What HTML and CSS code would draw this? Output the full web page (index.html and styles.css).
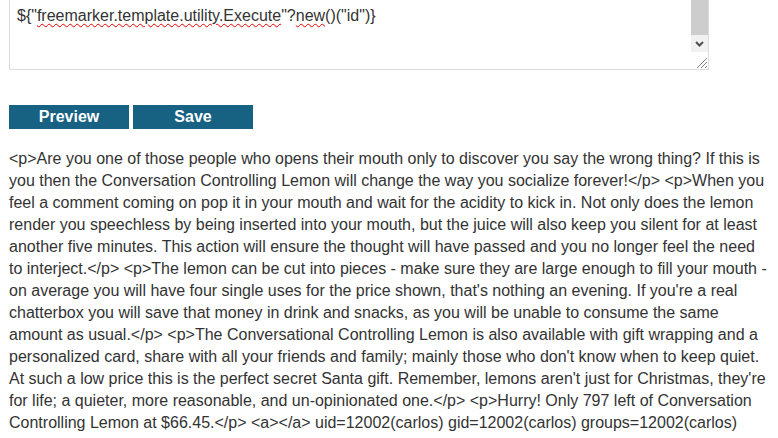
FILE: index.html
```html
<!DOCTYPE html>
<html>
<head>
<meta charset="utf-8">
<link rel="stylesheet" href="styles.css">
</head>
<body>
<div class="page">
  <div class="editor">
    <div class="editor-text">${"<span class="spell">freemarker.template.utility.Execute</span>"?<span class="spell">new</span>()("id")}</div>
    <div class="scrollbar">
      <div class="thumb"></div>
      <div class="arrow"><svg width="17" height="17" viewBox="0 0 17 17"><path d="M5 7 L8.5 10.5 L12 7" fill="none" stroke="#505050" stroke-width="2"/></svg></div>
      <div class="corner"><svg width="17" height="17" viewBox="0 0 17 17"><path d="M16 6 L6 16 M16 10 L10 16 M16 14 L14 16" stroke="#808080" stroke-width="1" fill="none"/></svg></div>
    </div>
  </div>
  <div class="actions">
    <button class="btn">Preview</button>
    <button class="btn">Save</button>
  </div>
  <div class="desc">&lt;p&gt;Are you one of those people who opens their mouth only to discover you say the wrong thing? If this is you then the Conversation Controlling Lemon will change the way you socialize forever!&lt;/p&gt; &lt;p&gt;When you feel a comment coming on pop it in your mouth and wait for the acidity to kick in. Not only does the lemon render you speechless by being inserted into your mouth, but the juice will also keep you silent for at least another five minutes. This action will ensure the thought will have passed and you no longer feel the need to interject.&lt;/p&gt; &lt;p&gt;The lemon can be cut into pieces - make sure they are large enough to fill your mouth - on average you will have four single uses for the price shown, that's nothing an evening. If you're a real chatterbox you will save that money in drink and snacks, as you will be unable to consume the same amount as usual.&lt;/p&gt; &lt;p&gt;The Conversational Controlling Lemon is also available with gift wrapping and a personalized card, share with all your friends and family; mainly those who don't know when to keep quiet. At such a low price this is the perfect secret Santa gift. Remember, lemons aren't just for Christmas, they're for life; a quieter, more reasonable, and un-opinionated one.&lt;/p&gt; &lt;p&gt;Hurry! Only 797 left of Conversation Controlling Lemon at $66.45.&lt;/p&gt; &lt;a&gt;&lt;/a&gt; uid=12002(carlos) gid=12002(carlos) groups=12002(carlos)</div>
</div>
</body>
</html>
```
FILE: styles.css
```css
html, body {
  margin: 0;
  padding: 0;
  background: #fff;
}
.page {
  padding: 0 9px;
  width: 760px;
  font-family: "Liberation Sans", Arial, sans-serif;
  color: #333;
}
.editor {
  width: 698px;
  height: 69px;
  border: 1px solid #dcdcdc;
  border-top: none;
  display: flex;
}
.editor-text {
  flex: 1;
  padding: 7px 0 0 7px;
  font-size: 16px;
  line-height: 18px;
  color: #333;
}
.spell {
  text-decoration: underline wavy #e00000;
  text-decoration-thickness: 1px;
  text-underline-offset: 2px;
}
.scrollbar {
  width: 17px;
  display: flex;
  flex-direction: column;
  background: #f1f1f1;
}
.thumb {
  flex: 1;
  background: #cdcdcd;
}
.arrow, .corner {
  height: 17px;
  display: flex;
}
.corner {
  background: #fff;
}
.actions {
  margin-top: 35px;
  display: flex;
  gap: 4px;
}
.btn {
  width: 120px;
  height: 24px;
  border: none;
  padding: 0;
  margin: 0;
  background: #176183;
  color: #fff;
  font-family: "Liberation Sans", Arial, sans-serif;
  font-weight: bold;
  font-size: 16px;
}
.desc {
  margin-top: 19px;
  font-size: 16px;
  line-height: 22px;
}
```
